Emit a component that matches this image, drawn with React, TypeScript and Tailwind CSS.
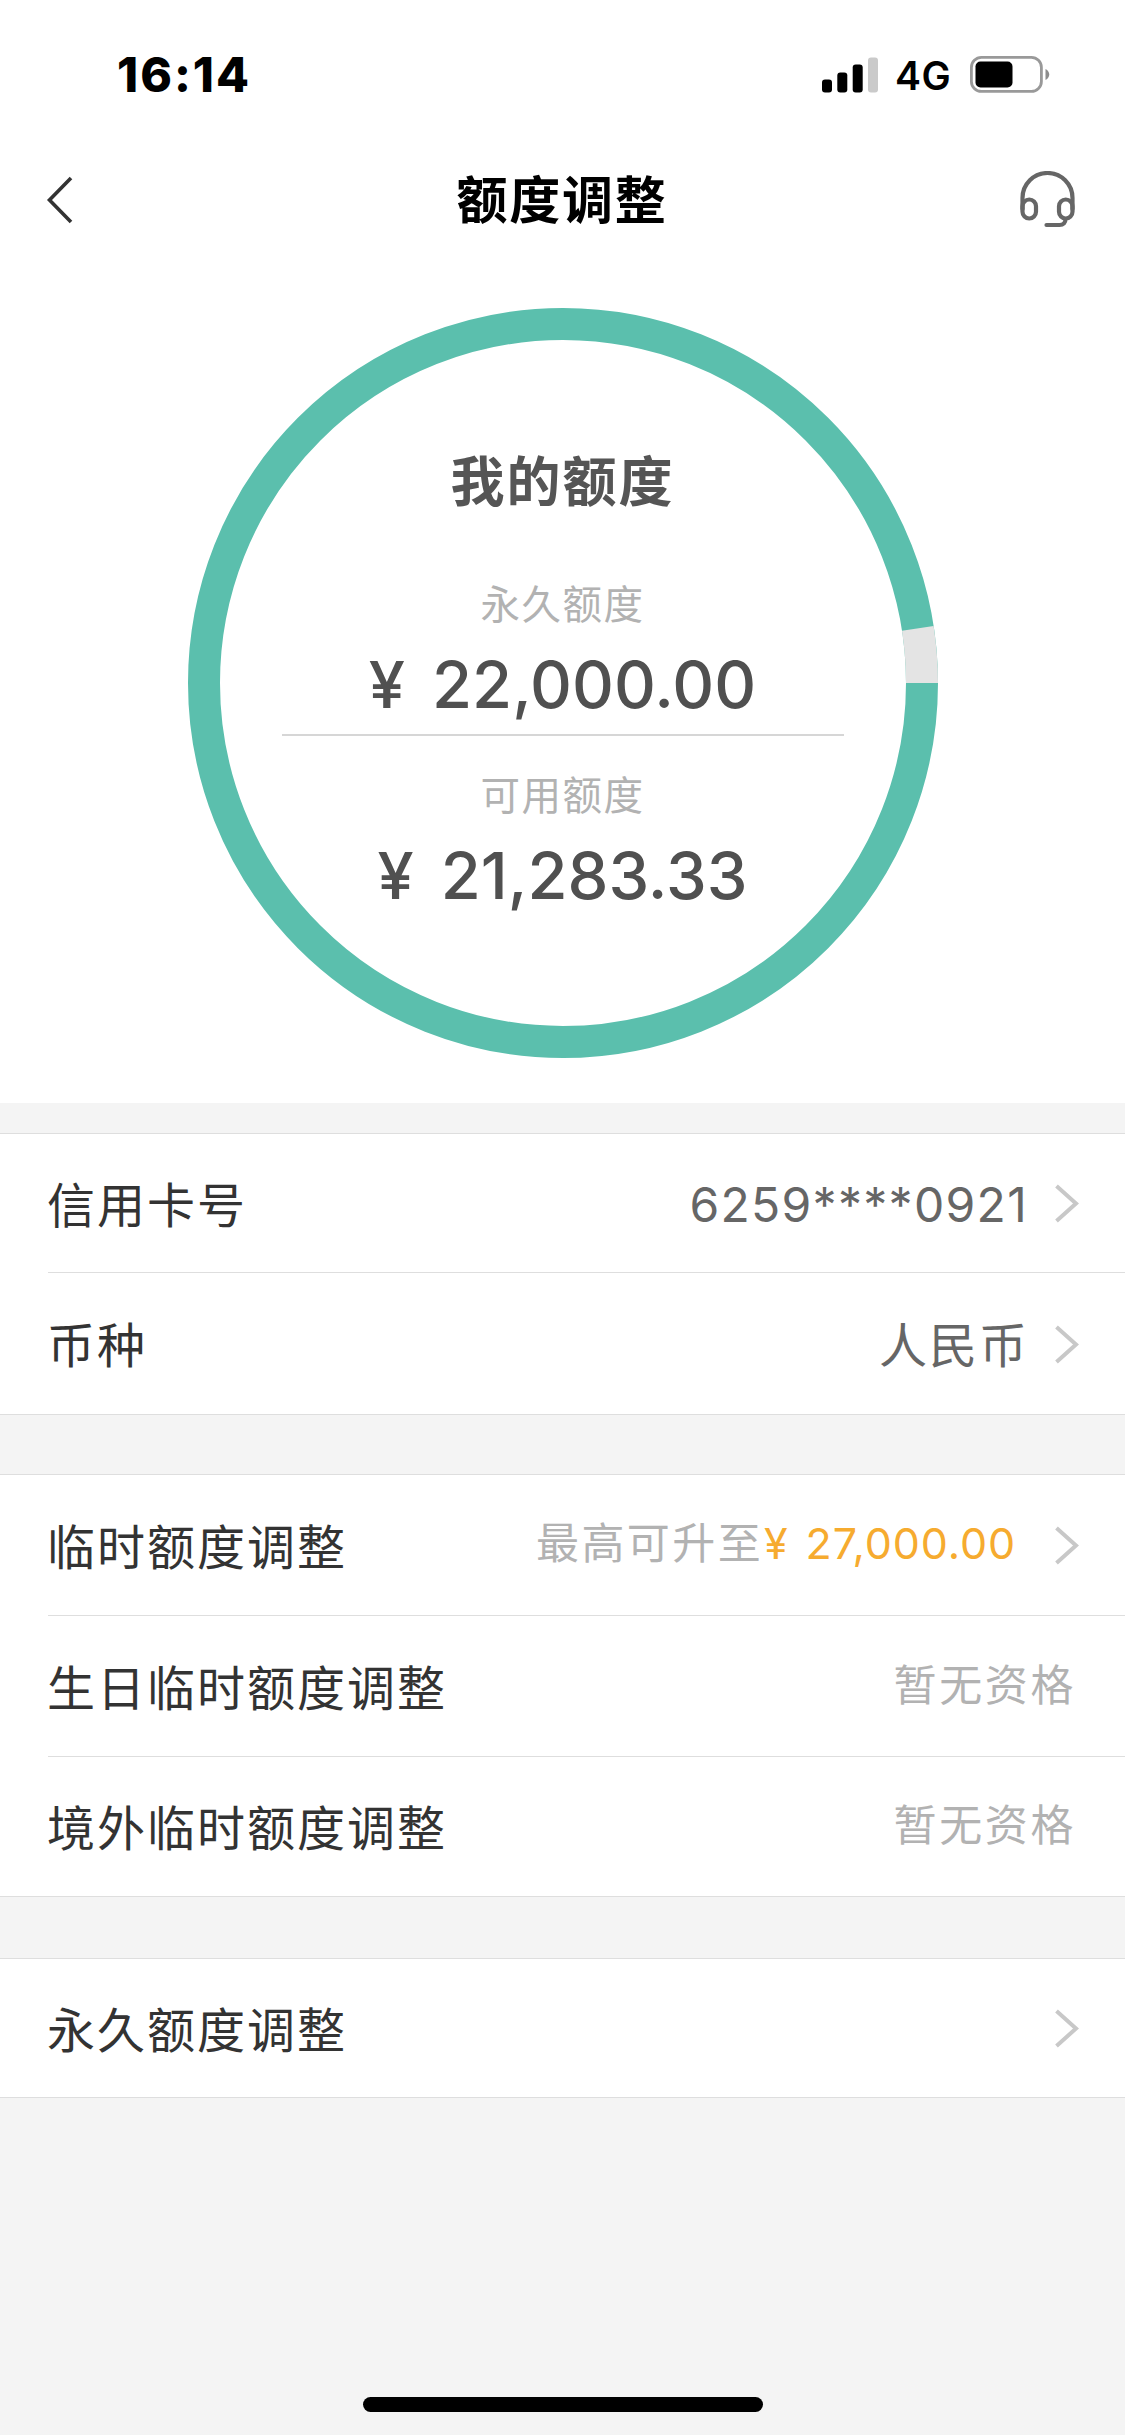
import type { ReactNode } from "react";

const Chevron = () => {
  return (
    <svg width="26" height="42" viewBox="0 0 26 42" fill="none">
      <path d="M2.5 4L22 21.5L2.5 39" stroke="#c8c8c8" strokeWidth="4" />
    </svg>
  );
};

const StatusBar = () => {
  return (
    <div className="flex h-[132px] items-start justify-between pl-[117px] pr-[75px] pt-[45px] text-black">
      <p className="font-['Inter'] text-[48px] font-extrabold leading-[60px] tracking-[2px]">
        16:14
      </p>
      <div className="flex h-[60px] items-center">
        <svg width="57" height="36" viewBox="0 0 57 36">
          <rect x="0" y="22.5" width="10" height="13" rx="3" />
          <rect x="15.3" y="15.5" width="10" height="20" rx="3" />
          <rect x="30.7" y="7.5" width="10" height="28" rx="3" />
          <rect x="46" y="0.5" width="10" height="35" rx="3" fill="#cacaca" />
        </svg>
        <p className="ml-[16px] mt-[2px] w-[59px] font-['Inter'] text-[39px] font-semibold leading-[60px] tracking-[0.5px]">
          4G
        </p>
        <svg
          className="ml-[16px]"
          width="80"
          height="38"
          viewBox="0 0 80 38"
          fill="none"
        >
          <rect
            x="1.4"
            y="1.4"
            width="70"
            height="34"
            rx="10"
            stroke="#999"
            strokeWidth="2.8"
          />
          <rect x="5.5" y="5.5" width="37" height="26" rx="5" fill="#000" />
          <path d="M75.5 13C80.5 15.500 80.5 21.500 75.5 24Z" fill="#8c8c8c" />
        </svg>
      </div>
    </div>
  );
};

const Header = () => {
  return (
    <div className="flex h-[134px] items-center justify-between pl-[46px] pr-[49px]">
      <svg width="58" height="50" viewBox="0 0 58 50" fill="none">
        <path d="M25 4L3.5 26L25 48" stroke="#333" strokeWidth="3.6" />
      </svg>
      <h1 className="mb-[5px] text-[51px] font-bold leading-[60px] tracking-[1.7px] text-black">
        额度调整
      </h1>
      <svg
        width="56"
        height="57"
        viewBox="0 0 56 57"
        fill="none"
        stroke="#666"
        strokeWidth="4.2"
        strokeLinecap="round"
      >
        <path d="M2.500 38V27a25 25 0 0 1 50 0v11" />
        <rect x="2.5" y="28.5" width="13.5" height="19" rx="6.75" />
        <rect x="39" y="28.5" width="13.5" height="19" rx="6.75" />
        <path d="M45.500 48C45.500 51.500 43.500 54 39.500 54H26.500" />
      </svg>
    </div>
  );
};

const Amount = ({ value }: { value: string }) => {
  return (
    <p className="flex justify-center gap-[27px] font-['Inter'] text-[65px] font-medium leading-[80px] text-[#505050]">
      <span>¥</span>
      <span>{value}</span>
    </p>
  );
};

const LimitRing = () => {
  return (
    <div className="flex h-[837px] justify-center pt-[42px]">
      <div className="relative h-[750px] w-[750px]">
        <svg
          className="absolute inset-0"
          width="750"
          height="750"
          viewBox="0 0 750 750"
          fill="none"
        >
          <circle cx="375" cy="375" r="359" stroke="#5bbfad" strokeWidth="32" />
          <path
            d="M734 375A359 359 0 0 0 729.8 320.400"
            stroke="#e4e4e4"
            strokeWidth="32"
          />
        </svg>
        <div className="relative flex flex-col items-center pt-[133px]">
          <h2 className="text-[54px] font-bold leading-[76px] tracking-[2px] text-[#555]">
            我的额度
          </h2>
          <p className="mb-[13px] mt-[55px] text-[39.5px] leading-[60px] tracking-[1.500px] text-[#b2b2b2]">
            永久额度
          </p>
          <Amount value="22,000.00" />
          <div className="mt-[9px] h-[2px] w-[562px] bg-[#d6d6d6]" />
          <p className="mb-[13px] mt-[27px] text-[39.5px] leading-[60px] tracking-[1.500px] text-[#b2b2b2]">
            可用额度
          </p>
          <Amount value="21,283.33" />
        </div>
      </div>
    </div>
  );
};

const Row = ({
  label,
  className,
  children,
}: {
  label: string;
  className: string;
  children?: ReactNode;
}) => {
  return (
    <div
      className={`ml-[48px] flex items-center justify-between border-[#dedede] pr-[45px] ${className}`}
    >
      <p className="mb-[3px] ml-[-1px] text-[48px] leading-[72px] tracking-[2px] text-[#333]">
        {label}
      </p>
      <div className="flex items-center">{children}</div>
    </div>
  );
};

const NotEligible = () => {
  return (
    <p className="mb-[9px] mr-[4px] text-[43px] leading-[60px] tracking-[2.600px] text-[#b2b2b2]">
      暂无资格
    </p>
  );
};

export default function App() {
  return (
    <div className="flex h-[2435px] w-[1125px] flex-col bg-[#f4f4f4] font-['Noto_Sans_CJK_SC',sans-serif]">
      <div className="h-[1103px] bg-white">
        <StatusBar />
        <Header />
        <LimitRing />
      </div>

      <div className="mt-[30px] border-y border-[#dedede] bg-white">
        <Row label="信用卡号" className="h-[139px] border-b">
          <p className="mr-[26px] mt-[4px] font-['Inter'] text-[48px] leading-[60px] tracking-[1.300px] text-[#666]">
            6259****0921
          </p>
          <Chevron />
        </Row>
        <Row label="币种" className="h-[141px]">
          <p className="mb-[3px] mr-[25px] text-[48px] leading-[72px] tracking-[2px] text-[#666]">
            人民币
          </p>
          <Chevron />
        </Row>
      </div>

      <div className="mt-[59px] border-y border-[#dedede] bg-white">
        <Row label="临时额度调整" className="h-[141px] border-b">
          <p className="mb-[10px] mr-[1px] text-[43px] leading-[60px] tracking-[2.400px] text-[#b2b2b2]">
            最高可升至
          </p>
          <p className="mb-[5px] mr-[38px] flex gap-[17px] font-['Inter'] text-[43px] leading-[60px] tracking-[0.900px] text-[#f6ab2f]">
            <span>¥</span>
            <span>27,000.00</span>
          </p>
          <Chevron />
        </Row>
        <Row label="生日临时额度调整" className="h-[141px] border-b">
          <NotEligible />
        </Row>
        <Row label="境外临时额度调整" className="h-[139px]">
          <NotEligible />
        </Row>
      </div>

      <div className="mt-[61px] border-y border-[#dedede] bg-white">
        <Row label="永久额度调整" className="h-[138px]">
          <Chevron />
        </Row>
      </div>

      <div className="mx-auto mb-[23px] mt-auto h-[15px] w-[400px] rounded-full bg-black" />
    </div>
  );
}
